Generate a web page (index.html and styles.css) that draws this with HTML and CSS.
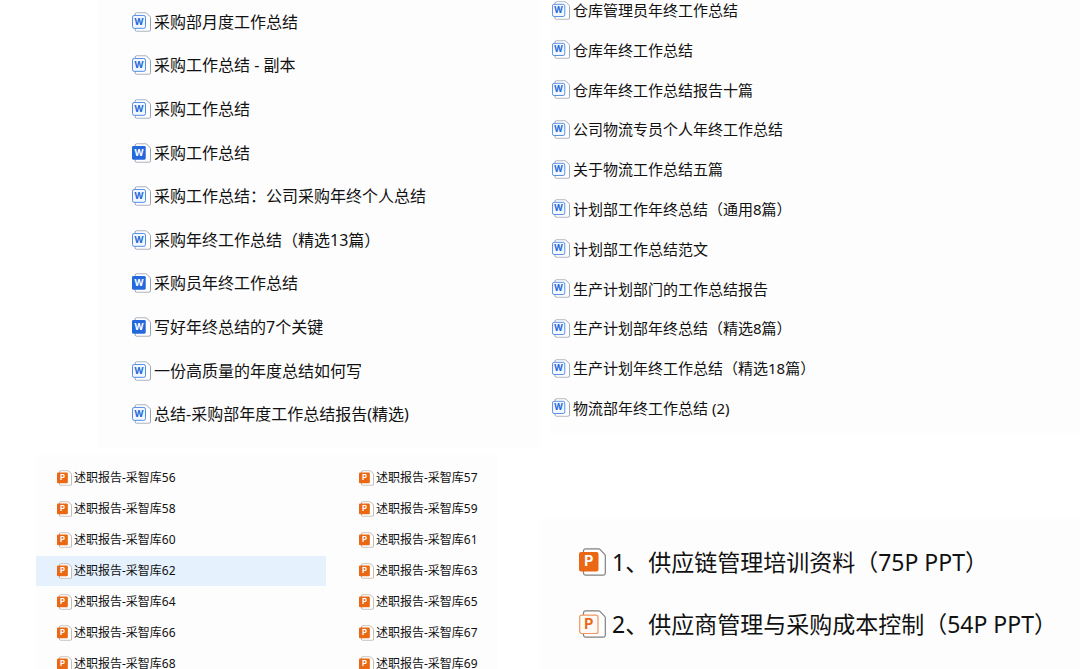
FILE: index.html
```html
<!DOCTYPE html>
<html lang="zh-CN">
<head>
  <meta charset="utf-8">
  <title>工作总结</title>
  <link rel="stylesheet" href="styles.css">
</head>
<body>
  <!-- Shared file icons -->
  <svg class="icon-defs" aria-hidden="true">
    <symbol id="page" viewBox="0 0 27 28">
      <path d="M4.5 5V3a2.2 2.2 0 0 1 2.2-2.2H19.5a2 2 0 0 1 1.4.6l4.8 5a2 2 0 0 1 .6 1.4V25a2.2 2.2 0 0 1-2.2 2.2H6.7a2.2 2.2 0 0 1-2.2-2.2V5z" fill="#fff" stroke="currentColor" stroke-width="1.2"/>
    </symbol>
    <symbol id="doc" viewBox="0 0 27 28">
      <use href="#page"/>
      <rect x="0.7" y="4.7" width="18.5" height="18.3" rx="2.5" fill="#f3f8ff" stroke="#4f8ae6" stroke-width="1.4"/>
      <text class="icon-letter" x="9.8" y="18.5" font-size="13" fill="#2368d8">W</text>
    </symbol>
    <symbol id="doc-solid" viewBox="0 0 27 28">
      <use href="#page"/>
      <rect x="0" y="4" width="19.5" height="19.5" rx="2" fill="#2468dc"/>
      <text class="icon-letter" x="9.8" y="18.2" font-size="13" fill="#fff">W</text>
    </symbol>
    <symbol id="ppt" viewBox="0 0 27 28">
      <use href="#page"/>
      <rect x="0.7" y="5.2" width="18.3" height="18.3" rx="2" fill="#fffaf6" stroke="#ee9860" stroke-width="1.2"/>
      <text class="icon-letter" x="9.8" y="18.6" font-size="14" fill="#e8681a">P</text>
    </symbol>
    <symbol id="ppt-solid" viewBox="0 0 27 28">
      <use href="#page"/>
      <rect x="0" y="4" width="19.5" height="19.5" rx="2" fill="#ea6814"/>
      <text class="icon-letter" x="9.8" y="18" font-size="14" fill="#fff">P</text>
    </symbol>
  </svg>

  <main class="board">
    <div class="column column-left">
      <ul class="panel file-list purchase-list">
        <li><svg class="icon"><use href="#doc"/></svg>采购部月度工作总结</li>
        <li><svg class="icon"><use href="#doc"/></svg>采购工作总结 - 副本</li>
        <li><svg class="icon"><use href="#doc"/></svg>采购工作总结</li>
        <li><svg class="icon"><use href="#doc-solid"/></svg>采购工作总结</li>
        <li><svg class="icon"><use href="#doc"/></svg>采购工作总结：公司采购年终个人总结</li>
        <li><svg class="icon"><use href="#doc"/></svg>采购年终工作总结（精选13篇）</li>
        <li><svg class="icon"><use href="#doc-solid"/></svg>采购员年终工作总结</li>
        <li><svg class="icon"><use href="#doc-solid"/></svg>写好年终总结的7个关键</li>
        <li><svg class="icon"><use href="#doc"/></svg>一份高质量的年度总结如何写</li>
        <li><svg class="icon"><use href="#doc"/></svg>总结-采购部年度工作总结报告(精选)</li>
      </ul>

      <ul class="panel file-list report-list">
        <li><svg class="icon"><use href="#ppt-solid"/></svg>述职报告-采智库56</li>
        <li><svg class="icon"><use href="#ppt-solid"/></svg>述职报告-采智库57</li>
        <li><svg class="icon"><use href="#ppt-solid"/></svg>述职报告-采智库58</li>
        <li><svg class="icon"><use href="#ppt-solid"/></svg>述职报告-采智库59</li>
        <li><svg class="icon"><use href="#ppt-solid"/></svg>述职报告-采智库60</li>
        <li><svg class="icon"><use href="#ppt-solid"/></svg>述职报告-采智库61</li>
        <li class="selected"><svg class="icon"><use href="#ppt-solid"/></svg>述职报告-采智库62</li>
        <li><svg class="icon"><use href="#ppt-solid"/></svg>述职报告-采智库63</li>
        <li><svg class="icon"><use href="#ppt-solid"/></svg>述职报告-采智库64</li>
        <li><svg class="icon"><use href="#ppt-solid"/></svg>述职报告-采智库65</li>
        <li><svg class="icon"><use href="#ppt-solid"/></svg>述职报告-采智库66</li>
        <li><svg class="icon"><use href="#ppt-solid"/></svg>述职报告-采智库67</li>
        <li><svg class="icon"><use href="#ppt-solid"/></svg>述职报告-采智库68</li>
        <li><svg class="icon"><use href="#ppt-solid"/></svg>述职报告-采智库69</li>
      </ul>
    </div>

    <div class="column column-right">
      <ul class="panel file-list warehouse-list">
        <li><svg class="icon"><use href="#doc"/></svg>仓库管理员年终工作总结</li>
        <li><svg class="icon"><use href="#doc"/></svg>仓库年终工作总结</li>
        <li><svg class="icon"><use href="#doc"/></svg>仓库年终工作总结报告十篇</li>
        <li><svg class="icon"><use href="#doc"/></svg>公司物流专员个人年终工作总结</li>
        <li><svg class="icon"><use href="#doc"/></svg>关于物流工作总结五篇</li>
        <li><svg class="icon"><use href="#doc"/></svg>计划部工作年终总结（通用8篇）</li>
        <li><svg class="icon"><use href="#doc"/></svg>计划部工作总结范文</li>
        <li><svg class="icon"><use href="#doc"/></svg>生产计划部门的工作总结报告</li>
        <li><svg class="icon"><use href="#doc"/></svg>生产计划部年终总结（精选8篇）</li>
        <li><svg class="icon"><use href="#doc"/></svg>生产计划年终工作总结（精选18篇）</li>
        <li><svg class="icon"><use href="#doc"/></svg>物流部年终工作总结 (2)</li>
      </ul>

      <ul class="panel file-list training-list">
        <li><svg class="icon"><use href="#ppt-solid"/></svg>1、供应链管理培训资料（75P PPT）</li>
        <li><svg class="icon"><use href="#ppt"/></svg>2、供应商管理与采购成本控制（54P PPT）</li>
      </ul>
    </div>
  </main>
</body>
</html>
```

FILE: styles.css
```css
body {
  margin: 0;
  font-family: "Noto Sans", "Noto Sans CJK SC", sans-serif;
  background: #ffffff;
  color: #111111;
}

.board {
  display: flex;
  height: 100vh;
  overflow: hidden;
}

.column {
  flex: 1;
  display: flex;
  flex-direction: column;
  min-width: 0;
}

.column-left {
  gap: 7px;
}

.column-right {
  gap: 86px;
}

.panel {
  background: #fdfdfd;
}

.file-list {
  list-style: none;
  margin: 0;
  padding: 0;
}

.file-list li {
  display: flex;
  align-items: center;
  white-space: nowrap;
}

/* Icons */
.icon-defs {
  display: none;
}

.icon {
  flex: none;
  color: #8490a3;
}

.icon-letter {
  font-family: Inter, sans-serif;
  font-weight: 700;
  text-anchor: middle;
}

/* Purchasing summaries */
.purchase-list {
  display: grid;
  grid-auto-rows: 1fr;
  min-height: 436px;
  margin-left: 98px;
  padding: 0 0 12px 34px;
  font-size: 16px;
  line-height: 24px;
}

.purchase-list li {
  gap: 3px;
}

.purchase-list .icon {
  width: 19px;
  height: 20px;
}

/* Debrief reports, two columns */
.report-list {
  flex: 1;
  display: grid;
  grid-template-columns: 29fr 16fr;
  grid-auto-rows: 30px;
  gap: 1px 12px;
  margin: 0 42px 0 36px;
  padding-top: 8px;
  font-size: 12px;
  line-height: 22px;
}

.report-list li {
  gap: 2px;
  padding-left: 21px;
}

.report-list .icon {
  width: 15px;
  height: 16px;
  color: #a09080;
}

.report-list .selected {
  background: #e5f2fe;
}

/* Warehouse and planning summaries */
.warehouse-list {
  display: grid;
  align-content: space-between;
  min-height: 418px;
  margin-left: 10px;
  padding: 0 0 15px 2px;
  font-size: 15px;
  line-height: 20px;
}

.warehouse-list li {
  gap: 3px;
}

.warehouse-list .icon {
  width: 18px;
  height: 19px;
}

/* Training decks */
.training-list {
  flex: 1;
  padding: 12px 0 0 39px;
  font-size: 23px;
  line-height: 62px;
}

.training-list li {
  gap: 6px;
}

.training-list .icon {
  width: 27px;
  height: 28px;
  color: #808080;
}
```
